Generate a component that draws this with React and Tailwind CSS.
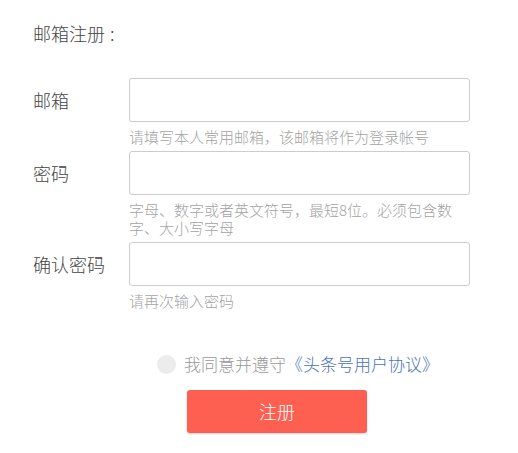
import React from "react";

const font = { fontFamily: '"Noto Sans CJK SC", "Noto Sans", sans-serif' };

function Row({ label, hint }) {
  return (
    <div className="flex items-start">
      <div className="w-[96px] h-[44px] flex items-center text-[18px] font-light text-[#444]">{label}</div>
      <div className="w-[341px]">
        <input className="block w-[341px] h-[44px] border border-[#cccccc] rounded-[3px] bg-white outline-none px-3" />
        <div className="mt-[6px] text-[15px] leading-[18px] font-light text-[#a3a3a3]">{hint}</div>
      </div>
    </div>
  );
}

export default function App() {
  return (
    <div className="w-[518px] h-[453px] bg-white overflow-hidden" style={font}>
      <div className="pl-[33px] pt-[22px]">
        <div className="text-[18px] leading-[22px] font-light text-[#444]">
          邮箱注册<span className="ml-[5px]">:</span>
        </div>
        <div className="mt-[34px] flex flex-col gap-[5px]">
          <Row label="邮箱" hint="请填写本人常用邮箱，该邮箱将作为登录帐号" />
          <Row label="密码" hint="字母、数字或者英文符号，最短8位。必须包含数字、大小写字母" />
          <Row label="确认密码" hint="请再次输入密码" />
        </div>
        <div className="mt-[43px] ml-[124px] flex items-center h-[22px]">
          <span className="w-[19px] h-[19px] rounded-full bg-[#ececec] shrink-0"></span>
          <span className="ml-[8px] text-[17px] leading-[22px] font-light text-[#999] whitespace-nowrap">
            我同意并遵守<span className="text-[#4a72b8]">《头条号用户协议》</span>
          </span>
        </div>
        <button className="mt-[15px] ml-[154px] w-[180px] h-[43px] rounded-[3px] bg-[#fd5f51] text-white text-[18px] font-light shadow-[0_1px_2px_rgba(0,0,0,0.2)]">
          注册
        </button>
      </div>
    </div>
  );
}
